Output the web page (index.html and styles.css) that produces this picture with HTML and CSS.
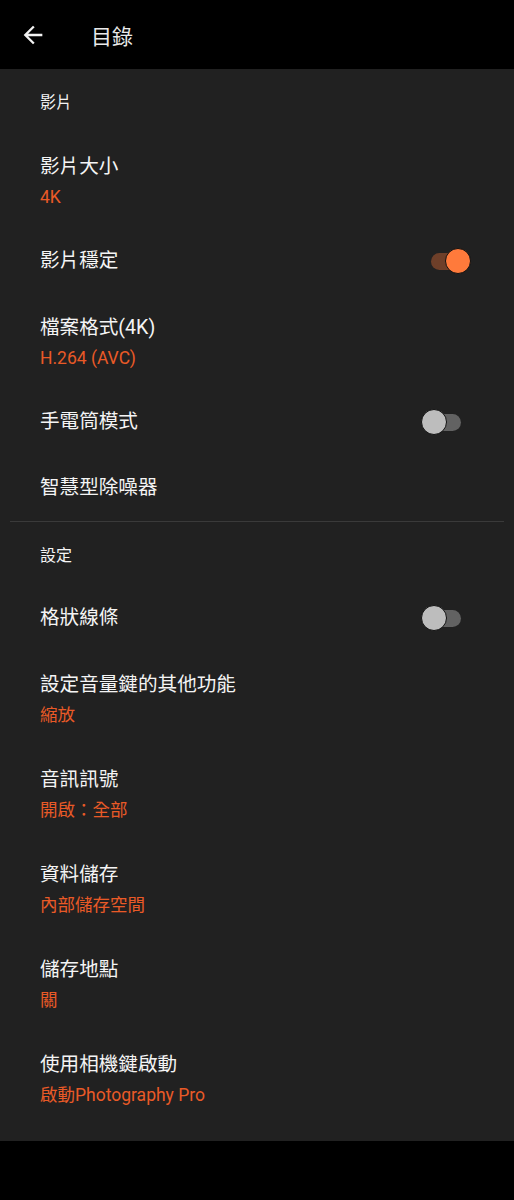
FILE: index.html
```html
<!DOCTYPE html>
<html lang="zh-Hant">
<head>
  <meta charset="UTF-8" />
  <meta name="viewport" content="width=device-width, initial-scale=1.0"/>
  <title>目錄</title>
  <link rel="stylesheet" href="styles.css">
</head>
<body>
  <header class="topbar">
    <svg class="back" viewBox="0 0 24 24" width="28" height="28">
      <path d="M20 11H7.83l5.59-5.59L12 4l-8 8 8 8 1.41-1.41L7.83 13H20v-2z" fill="#f2f2f2"/>
    </svg>
    <h1>目錄</h1>
  </header>

  <main class="menu">
    <section class="group">
      <div class="group-title">影片</div>
      <div class="row two">
        <span class="label">影片大小</span>
        <span class="value">4K</span>
      </div>
      <div class="row">
        <span class="label">影片穩定</span>
        <span class="switch on"><span class="thumb"></span></span>
      </div>
      <div class="row two">
        <span class="label">檔案格式(4K)</span>
        <span class="value">H.264 (AVC)</span>
      </div>
      <div class="row">
        <span class="label">手電筒模式</span>
        <span class="switch"><span class="thumb"></span></span>
      </div>
      <div class="row">
        <span class="label">智慧型除噪器</span>
      </div>
    </section>

    <hr class="divider">

    <section class="group">
      <div class="group-title second">設定</div>
      <div class="row">
        <span class="label">格狀線條</span>
        <span class="switch"><span class="thumb"></span></span>
      </div>
      <div class="row two">
        <span class="label">設定音量鍵的其他功能</span>
        <span class="value">縮放</span>
      </div>
      <div class="row two">
        <span class="label">音訊訊號</span>
        <span class="value">開啟：全部</span>
      </div>
      <div class="row two">
        <span class="label">資料儲存</span>
        <span class="value">內部儲存空間</span>
      </div>
      <div class="row two">
        <span class="label">儲存地點</span>
        <span class="value">關</span>
      </div>
      <div class="row two">
        <span class="label">使用相機鍵啟動</span>
        <span class="value">啟動Photography Pro</span>
      </div>
    </section>
  </main>
</body>
</html>
```

FILE: styles.css
```css
:root {
  --bg: #212121;
  --text: #f4f4f4;
  --accent: #e95a27;
  --thumb-on: #ff7a3b;
  --track-on: #6e3f29;
  --thumb-off: #bdbdbd;
  --track-off: #626262;
}

* {
  box-sizing: border-box;
}

body {
  margin: 0;
  background: #000;
  color: var(--text);
  font-family: Roboto, "Noto Sans CJK TC", sans-serif;
  min-height: 1200px;
}

.topbar {
  height: 69px;
  display: flex;
  align-items: center;
  padding-left: 19px;
  background: #000;
}

.back {
  display: block;
  flex-shrink: 0;
}

.topbar h1 {
  margin: 0 0 0 44px;
  font-size: 21px;
  font-weight: 400;
  color: #eaeaea;
}

.menu {
  background: var(--bg);
  padding-bottom: 15px;
}

.group-title {
  height: 64px;
  display: flex;
  align-items: center;
  padding-left: 40px;
  font-size: 16px;
  font-weight: 400;
}

.group-title.second {
  height: 63px;
}

.row {
  height: 66px;
  display: flex;
  align-items: center;
  justify-content: space-between;
  padding-left: 40px;
}

.row.two {
  height: 95px;
  padding-top: 4px;
  flex-direction: column;
  align-items: flex-start;
  justify-content: center;
}

.label {
  font-size: 19.6px;
  line-height: 30px;
  font-weight: 400;
}

.value {
  font-size: 17.5px;
  line-height: 31px;
  color: var(--accent);
}

.divider {
  margin: 0 10px;
  border: none;
  height: 1px;
  background: #3a3a3a;
}

.switch {
  position: relative;
  width: 34px;
  height: 17px;
  border-radius: 9px;
  background: var(--track-off);
  margin-right: 53px;
}

.switch .thumb {
  position: absolute;
  top: -5px;
  left: -6px;
  width: 26px;
  height: 26px;
  border-radius: 50%;
  background: var(--thumb-off);
  border: 1.5px solid #111;
}

.switch.on {
  background: var(--track-on);
  margin-right: 49px;
}

.switch.on .thumb {
  left: 14px;
  background: var(--thumb-on);
}
```
